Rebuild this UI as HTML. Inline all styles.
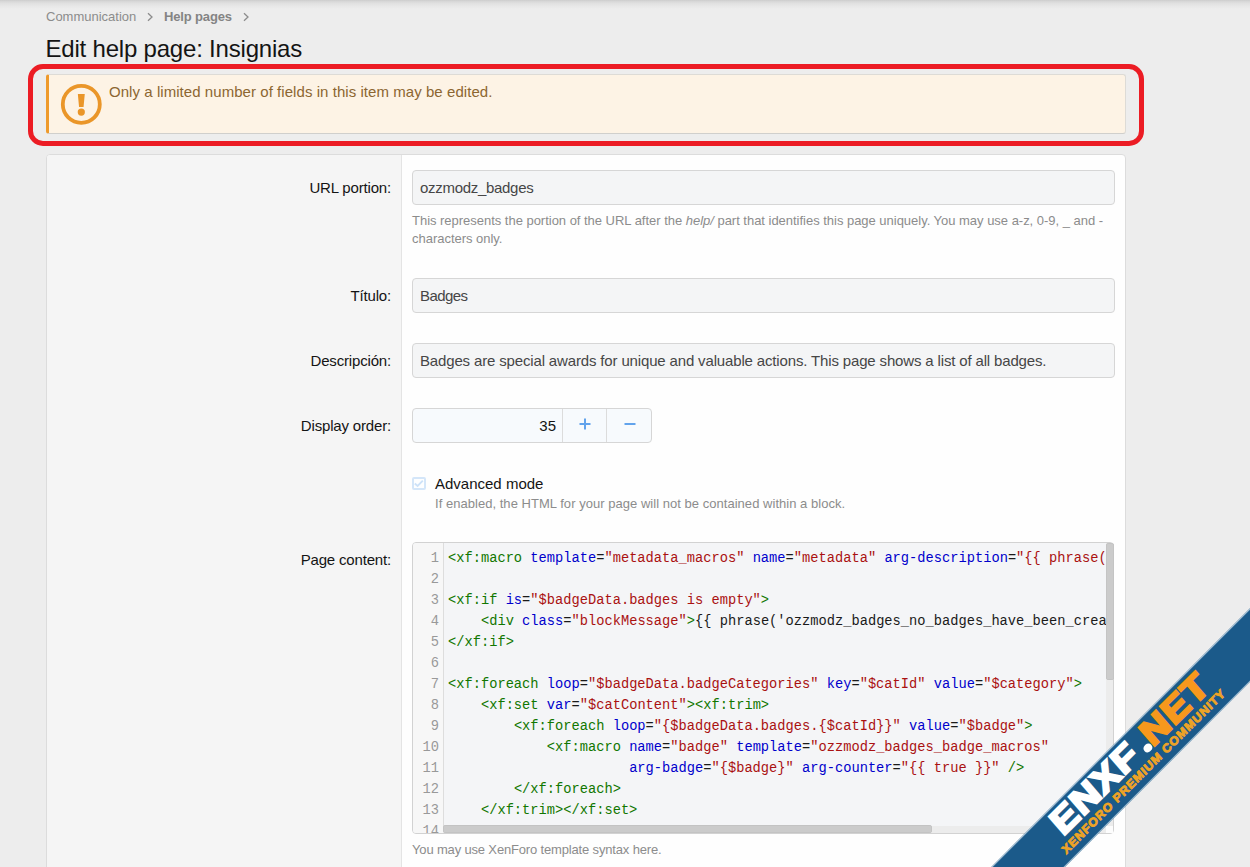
<!DOCTYPE html>
<html lang="en">
<head>
<meta charset="utf-8">
<title>Edit help page: Insignias</title>
<style>
*{box-sizing:border-box;margin:0;padding:0}
html,body{width:1250px;height:867px;overflow:hidden}
body{background:#ededed;font-family:"Liberation Sans",Arial,sans-serif;color:#141414;position:relative;font-size:15px}
.abs{position:absolute;white-space:nowrap}
#topshadow{left:0;top:0;width:1250px;height:9px;background:linear-gradient(#cdcdcd,#d9d9d9 18%,#e2e2e2 42%,#e8e8e8 70%,#ededed)}
.crumb{top:9px;height:16px;line-height:16px;font-size:13px;color:#8c8c8c}
.crumb b{font-weight:700;color:#848484;letter-spacing:-0.15px}
.chev{top:11px;width:8px;height:12px}
#title{left:45.5px;top:33px;font-size:24px;line-height:32px;color:#141414;letter-spacing:-0.2px}
#redbox{left:28px;top:64px;width:1116px;height:82px;border:5px solid #ec1c24;border-radius:15px}
#alert{left:46px;top:74px;width:1080px;height:60px;background:#fdf3e5;border:1px solid #dddbd6;border-bottom-color:#d0cfcc;border-left:3px solid #ee9a2c;border-radius:3px}
#alerttext{left:109px;top:81px;line-height:21px;font-size:15px;color:#8c6631;letter-spacing:0.055px}
#block{left:46px;top:154px;width:1080px;height:730px;background:#fefefe;border:1px solid #dcdcdc;border-radius:4px;overflow:hidden}
#labelcol{left:0;top:0;width:355px;height:730px;background:#f5f5f5;border-right:1px solid #e4e4e4}
.label{width:300px;text-align:right;font-size:15px;line-height:21px;color:#141414;letter-spacing:-0.17px}
.input{left:412px;width:703px;height:35px;background:#f4f5f6;border:1px solid #d6d6d6;border-radius:4px;font-size:15px;line-height:21px;padding:6px 7px;color:#464646;overflow:hidden}
.hint{font-size:13px;line-height:18px;color:#8c8c8c}

#numbox{left:412px;top:408px;width:240px;height:35px;border:1px solid #d6d6d6;border-radius:4px;background:#f7fafd;overflow:hidden}
#numinput{left:0;top:0;width:150px;height:33px;border-right:1px solid #dcdcdc;text-align:right;padding:5.5px 6px 0 0;font-size:15px;line-height:21px;color:#141414}
.nbtn{top:0;height:33px;display:flex;align-items:center;justify-content:center}
#cbox{left:412.1px;top:476.8px;width:13.6px;height:13.2px;border:2px solid #d4e6f9;border-radius:2px;background:#fdfeff}
#editor{left:412px;top:542px;width:702px;height:292px;border:1px solid #d2d2d2;border-radius:4px;background:#f4f5f7;overflow:hidden;font-family:"Liberation Mono","DejaVu Sans Mono",monospace;font-size:13.72px;line-height:21px}
#gutter{left:0;top:0;width:30.5px;height:290px;background:#f7f7f7;border-right:1px solid #dddddd;overflow:hidden;padding-top:5px}
.ln{text-align:right;padding-right:3.5px;color:#999;height:21px}
#code{left:35px;top:5px;width:658px;height:278px;overflow:hidden;color:#1a1a1a}
.cl{height:21px;white-space:pre}
.t{color:#117700}.a{color:#0000cc}.s{color:#aa1111}
#vtrack{left:1106px;top:543px;width:7px;height:283px;background:#ececec}
#vthumb{left:1106.3px;top:542.5px;width:7.7px;height:137.8px;background:#cbcbcb;border-radius:3px;box-shadow:inset 0 0 0 0.5px #bcbcbc}
#htrack{left:443px;top:825.5px;width:663px;height:7.5px;background:#ececec}
#hthumb{left:443.3px;top:825.3px;width:488.3px;height:7.4px;background:#cbcbcb;border-radius:3px;box-shadow:inset 0 0 0 0.5px #bcbcbc}
#corner{left:1106px;top:825.5px;width:7px;height:7.5px;background:#fdfdfd}
#ribbon{left:838.5px;top:729.75px;width:600px;height:51.5px;background:#1b5a8a;border-top:1px solid #a9c3d6;border-bottom:1px solid #9fbdd2;transform:rotate(-45deg);transform-origin:50% 50%}
#rmain{left:190px;top:-3px;font-weight:700;font-size:35px;line-height:38px;transform:rotate(0.25deg) skewX(-4deg) scaleX(1.145);transform-origin:0 50%;letter-spacing:1px;color:#fff;-webkit-text-stroke:2.4px #fff}
#rmain b{color:#f7981d;-webkit-text-stroke:2.4px #f7981d}
#rmain span{display:inline-block;width:7.6px;height:8.6px;line-height:7px;border-radius:50%;background:#fff;color:transparent;-webkit-text-stroke:0;overflow:hidden;margin:0 -0.5px 0 6px;vertical-align:baseline;position:relative;top:1.2px}
#rmain b{letter-spacing:1px}
#rsub{left:179px;top:33.4px;font-weight:700;font-size:11.8px;line-height:13px;color:#eea326;-webkit-text-stroke:0.9px #eea326;transform:skewX(-4deg) scaleX(1.061);transform-origin:0 50%;letter-spacing:0.8px}
.nbtn svg{position:relative;top:-1.2px}
</style>
</head>
<body>
<div class="abs" id="topshadow"></div>

<div class="abs crumb" style="left:46px">Communication</div>
<svg class="abs chev" style="left:146px" viewBox="0 0 8 12"><path d="M2 2.2 L6 6 L2 9.8" fill="none" stroke="#8c8c8c" stroke-width="1.3"/></svg>
<div class="abs crumb" style="left:164px"><b>Help pages</b></div>
<svg class="abs chev" style="left:242px" viewBox="0 0 8 12"><path d="M2 2.2 L6 6 L2 9.8" fill="none" stroke="#8c8c8c" stroke-width="1.3"/></svg>

<div class="abs" id="title">Edit help page: Insignias</div>

<div class="abs" id="alert"></div>
<svg class="abs" style="left:60px;top:83px;width:43px;height:43px" viewBox="0 0 43 43">
  <circle cx="21.3" cy="21.3" r="18.5" fill="none" stroke="#ea9629" stroke-width="3.8"/>
  <path d="M17.85 11.05h6.9l-1.2 12.95h-4.5z" fill="#ea9629"/>
  <circle cx="21.3" cy="29.1" r="3.6" fill="#ea9629"/>
</svg>
<div class="abs" id="alerttext">Only a limited number of fields in this item may be edited.</div>
<div class="abs" id="redbox"></div>

<div class="abs" id="block">
  <div class="abs" id="labelcol"></div>
</div>

<div class="abs label" style="left:91px;top:177px">URL portion:</div>
<div class="abs input" style="top:170px;letter-spacing:-0.3px">ozzmodz_badges</div>
<div class="abs hint" style="left:412px;top:212px;letter-spacing:-0.022px">This represents the portion of the URL after the <i>help/</i> part that identifies this page uniquely. You may use a-z, 0-9, _ and -<br>characters only.</div>

<div class="abs label" style="left:91px;top:285px">Título:</div>
<div class="abs input" style="top:278px;letter-spacing:-0.55px">Badges</div>

<div class="abs label" style="left:91px;top:350px">Descripción:</div>
<div class="abs input" style="top:343px;letter-spacing:-0.152px">Badges are special awards for unique and valuable actions. This page shows a list of all badges.</div>

<div class="abs label" style="left:91px;top:415px">Display order:</div>

<div class="abs label" style="left:91px;top:549px">Page content:</div>

<!-- number box -->
<div class="abs" id="numbox">
  <div class="abs" id="numinput">35</div>
  <div class="abs nbtn" style="left:150px;width:44px"><svg viewBox="0 0 12 12" width="12" height="12"><path d="M6 0.5v11M0.5 6h11" stroke="#62a3ec" stroke-width="2" fill="none"/></svg></div>
  <div class="abs nbtn" style="left:193px;width:46px;border-left:1px solid #dcdcdc"><svg viewBox="0 0 12 12" width="12" height="12"><path d="M0.5 6h11" stroke="#62a3ec" stroke-width="2" fill="none"/></svg></div>
</div>

<!-- checkbox -->
<div class="abs" id="cbox"></div>
<svg class="abs" style="left:412px;top:476px;width:15px;height:15px" viewBox="0 0 15 15"><path d="M2.8 7.5 L5.6 9.9 L10.8 4.6" fill="none" stroke="#cde2f8" stroke-width="1.9"/></svg>
<div class="abs" style="left:435px;top:473px;font-size:15px;line-height:21px;color:#141414">Advanced mode</div>
<div class="abs hint" style="left:435px;top:495px;letter-spacing:0.033px">If enabled, the HTML for your page will not be contained within a block.</div>

<!-- code editor -->
<div class="abs" id="editor">
  <div class="abs" id="gutter"><div class="ln">1</div><div class="ln">2</div><div class="ln">3</div><div class="ln">4</div><div class="ln">5</div><div class="ln">6</div><div class="ln">7</div><div class="ln">8</div><div class="ln">9</div><div class="ln">10</div><div class="ln">11</div><div class="ln">12</div><div class="ln">13</div><div class="ln">14</div></div>
  <div class="abs" id="code">
<div class="cl"><span class="t">&lt;xf:macro</span> <span class="a">template</span>=<span class="s">"metadata_macros"</span> <span class="a">name</span>=<span class="s">"metadata"</span> <span class="a">arg-description</span>=<span class="s">"{{ phrase('ozzmodz_badges_help_page_description') }}"</span> <span class="t">/&gt;</span></div>
<div class="cl"> </div>
<div class="cl"><span class="t">&lt;xf:if</span> <span class="a">is</span>=<span class="s">"$badgeData.badges is empty"</span><span class="t">&gt;</span></div>
<div class="cl">    <span class="t">&lt;div</span> <span class="a">class</span>=<span class="s">"blockMessage"</span><span class="t">&gt;</span>{{ phrase('ozzmodz_badges_no_badges_have_been_created_yet') }}<span class="t">&lt;/div&gt;</span></div>
<div class="cl"><span class="t">&lt;/xf:if&gt;</span></div>
<div class="cl"> </div>
<div class="cl"><span class="t">&lt;xf:foreach</span> <span class="a">loop</span>=<span class="s">"$badgeData.badgeCategories"</span> <span class="a">key</span>=<span class="s">"$catId"</span> <span class="a">value</span>=<span class="s">"$category"</span><span class="t">&gt;</span></div>
<div class="cl">    <span class="t">&lt;xf:set</span> <span class="a">var</span>=<span class="s">"$catContent"</span><span class="t">&gt;&lt;xf:trim&gt;</span></div>
<div class="cl">        <span class="t">&lt;xf:foreach</span> <span class="a">loop</span>=<span class="s">"{$badgeData.badges.{$catId}}"</span> <span class="a">value</span>=<span class="s">"$badge"</span><span class="t">&gt;</span></div>
<div class="cl">            <span class="t">&lt;xf:macro</span> <span class="a">name</span>=<span class="s">"badge"</span> <span class="a">template</span>=<span class="s">"ozzmodz_badges_badge_macros"</span></div>
<div class="cl">                      <span class="a">arg-badge</span>=<span class="s">"{$badge}"</span> <span class="a">arg-counter</span>=<span class="s">"{{ true }}"</span> <span class="t">/&gt;</span></div>
<div class="cl">        <span class="t">&lt;/xf:foreach&gt;</span></div>
<div class="cl">    <span class="t">&lt;/xf:trim&gt;&lt;/xf:set&gt;</span></div>
<div class="cl"> </div>
  </div>
</div>
<div class="abs" id="vtrack"></div>
<div class="abs" id="htrack"></div>
<div class="abs" id="corner"></div>
<div class="abs" id="vthumb"></div>
<div class="abs" id="hthumb"></div>
<div class="abs hint" style="left:412px;top:840.7px;letter-spacing:-0.16px">You may use XenForo template syntax here.</div>

<!-- ribbon -->
<div class="abs" id="ribbon">
  <div class="abs" id="rmain">ENXF<span>.</span><b>NET</b></div>
  <div class="abs" id="rsub">XENFORO PREMIUM COMMUNITY</div>
</div>

</body>
</html>
